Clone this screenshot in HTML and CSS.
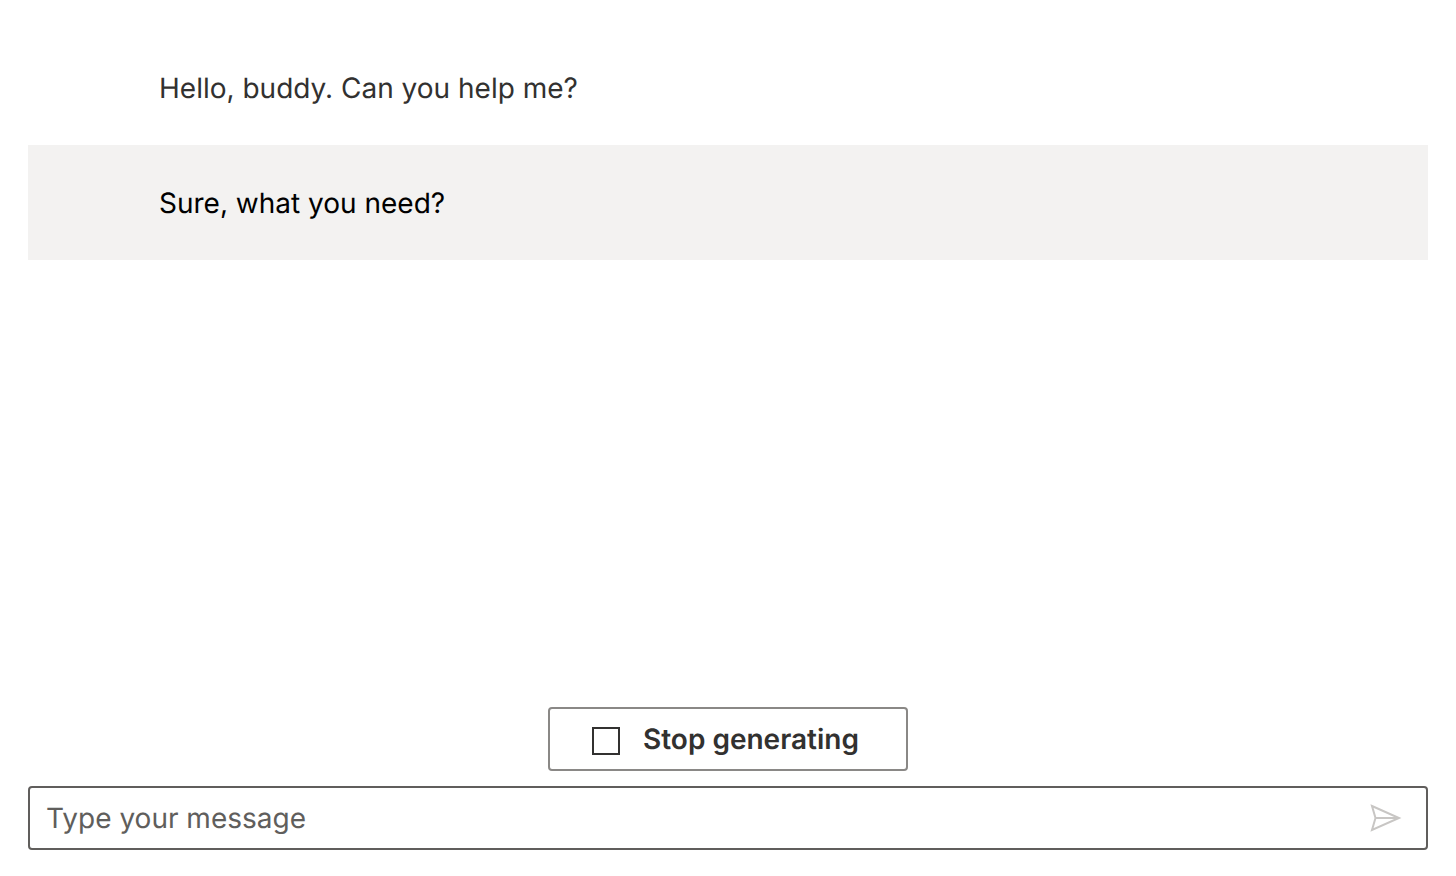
FILE: index.html
```html
<!DOCTYPE html>
<html lang="en">
<head>
<meta charset="utf-8">
<title>Chat</title>
<link rel="stylesheet" href="styles.css">
</head>
<body>
<main class="chat">
  <section class="messages" aria-label="Conversation">
    <p class="message">Hello, buddy. Can you help me?</p>
    <p class="message message-reply">Sure, what you need?</p>
  </section>
  <button class="stop" type="button">
    <svg class="icon icon-stop" viewBox="0 0 32 32" aria-hidden="true"><rect x="3" y="5" width="26" height="26"/></svg>
    <span>Stop generating</span>
  </button>
  <form class="composer">
    <input class="composer-input" type="text" placeholder="Type your message" aria-label="Type your message">
    <button class="send" type="button" aria-label="Send">
      <svg class="icon icon-send" viewBox="0 0 32 32" aria-hidden="true"><path d="M2 4 L29 16 L2 28 L5.500 16 Z M5.500 16 H29"/></svg>
    </button>
  </form>
</main>
</body>
</html>
```

FILE: styles.css
```css
* { box-sizing: border-box; }

body {
  margin: 0;
  font-family: Inter, "Liberation Sans", sans-serif;
  font-size: 28px;
  line-height: 38px;
  text-rendering: geometricPrecision;
  color: #323130;
  background: #fff;
}

.chat {
  display: flex;
  flex-direction: column;
  min-height: 100vh;
  padding: 30px 28px 26px;
}

.messages { flex: 1; }

.message {
  margin: 0;
  padding: 39px 131px 38px;
}

.message-reply {
  color: #000;
  background: #f3f2f1;
}

.icon {
  width: 32px;
  height: 32px;
  fill: none;
  stroke-width: 2;
}

.icon-stop { stroke: #323130; }

.icon-send { stroke: #c8c6c4; }

.stop {
  display: flex;
  align-items: center;
  align-self: center;
  gap: 21px;
  margin-bottom: 15px;
  padding: 11px 47px 11px 40px;
  border: 2px solid #8a8886;
  border-radius: 4px;
  background: #fff;
  color: #323130;
  font: inherit;
  font-weight: 600;
  text-rendering: inherit;
}

.composer {
  display: flex;
  align-items: center;
  border: 2px solid #605e5c;
  border-radius: 4px;
}

.composer-input {
  flex: 1;
  min-width: 0;
  height: 60px;
  padding: 0 16px;
  border: 0;
  outline: 0;
  background: none;
  color: #323130;
  font: inherit;
  text-rendering: inherit;
}

.composer-input::placeholder {
  color: #605e5c;
  opacity: 1;
}

.send {
  display: flex;
  margin-right: 24px;
  padding: 0;
  border: 0;
  background: none;
}
```
